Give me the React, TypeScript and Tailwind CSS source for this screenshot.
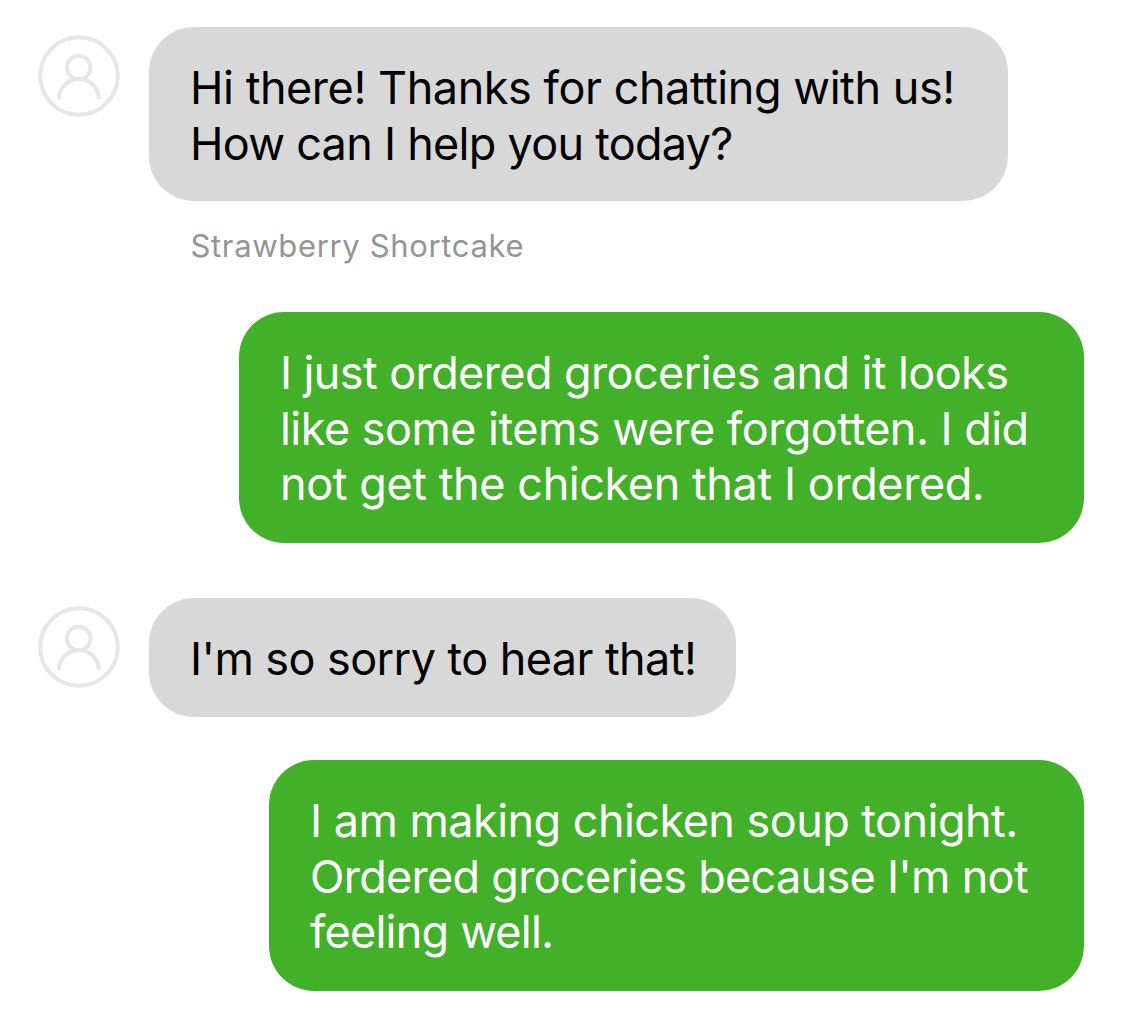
type Line = {
  text: string;
  tracking: string;
};

type Message = {
  from: "agent" | "customer";
  lines: Line[];
  size: string;
  spacing: string;
  name?: string;
};

const messages: Message[] = [
  {
    from: "agent",
    size: "h-[174px] w-[859px]",
    spacing: "",
    name: "Strawberry Shortcake",
    lines: [
      { text: "Hi there! Thanks for chatting with us!", tracking: "tracking-[-0.45px]" },
      { text: "How can I help you today?", tracking: "tracking-[-0.73px]" },
    ],
  },
  {
    from: "customer",
    size: "h-[231px] w-[845px]",
    spacing: "mt-[47px]",
    lines: [
      { text: "I just ordered groceries and it looks", tracking: "tracking-[-0.6px]" },
      { text: "like some items were forgotten. I did", tracking: "tracking-[-0.53px]" },
      { text: "not get the chicken that I ordered.", tracking: "tracking-[-0.42px]" },
    ],
  },
  {
    from: "agent",
    size: "h-[119px] w-[587px]",
    spacing: "mt-[55px]",
    lines: [{ text: "I'm so sorry to hear that!", tracking: "tracking-[-0.58px]" }],
  },
  {
    from: "customer",
    size: "h-[231px] w-[815px]",
    spacing: "mt-[43px]",
    lines: [
      { text: "I am making chicken soup tonight.", tracking: "tracking-[-0.54px]" },
      { text: "Ordered groceries because I'm not", tracking: "tracking-[-0.71px]" },
      { text: "feeling well.", tracking: "tracking-[-0.79px]" },
    ],
  },
];

const Avatar = () => (
  <svg
    width="82"
    height="82"
    viewBox="0 0 82 82"
    fill="none"
    stroke="currentColor"
    strokeWidth="4"
    className="mt-2 flex-none text-[#e6e6e6]"
  >
    <circle cx="41" cy="41" r="38.8" />
    <circle cx="40.7" cy="32.5" r="11.8" />
    <path d="M20.8 64.3V64a20 20 0 0 1 40 0v.3" />
  </svg>
);

function Bubble({ message }: { message: Message }) {
  const isAgent = message.from === "agent";
  return (
    <div
      className={`flex-none rounded-[45px] pl-[41px] pt-[33.4px] text-[45px] leading-[55.4px] ${message.size} ${
        isAgent ? "bg-[#d8d8d8] text-black" : "bg-[#43b02a] text-white"
      }`}
    >
      {message.lines.map((line) => (
        <p key={line.text} className={`whitespace-nowrap ${line.tracking}`}>
          {line.text}
        </p>
      ))}
    </div>
  );
}

export default function App() {
  return (
    <main className="h-[1011px] w-[1125px] overflow-hidden bg-white pl-[38px] pr-[41px] pt-[27px] font-['Inter',sans-serif]">
      {messages.map((message, i) => (
        <div key={i} className={message.spacing}>
          {message.from === "agent" ? (
            <div className="flex items-start gap-[29px]">
              <Avatar />
              <Bubble message={message} />
            </div>
          ) : (
            <div className="flex justify-end">
              <Bubble message={message} />
            </div>
          )}
          {message.name && (
            <p className="ml-[152.5px] mt-[25px] text-[31px] leading-[39px] tracking-[0.66px] text-[#949494]">
              {message.name}
            </p>
          )}
        </div>
      ))}
    </main>
  );
}
